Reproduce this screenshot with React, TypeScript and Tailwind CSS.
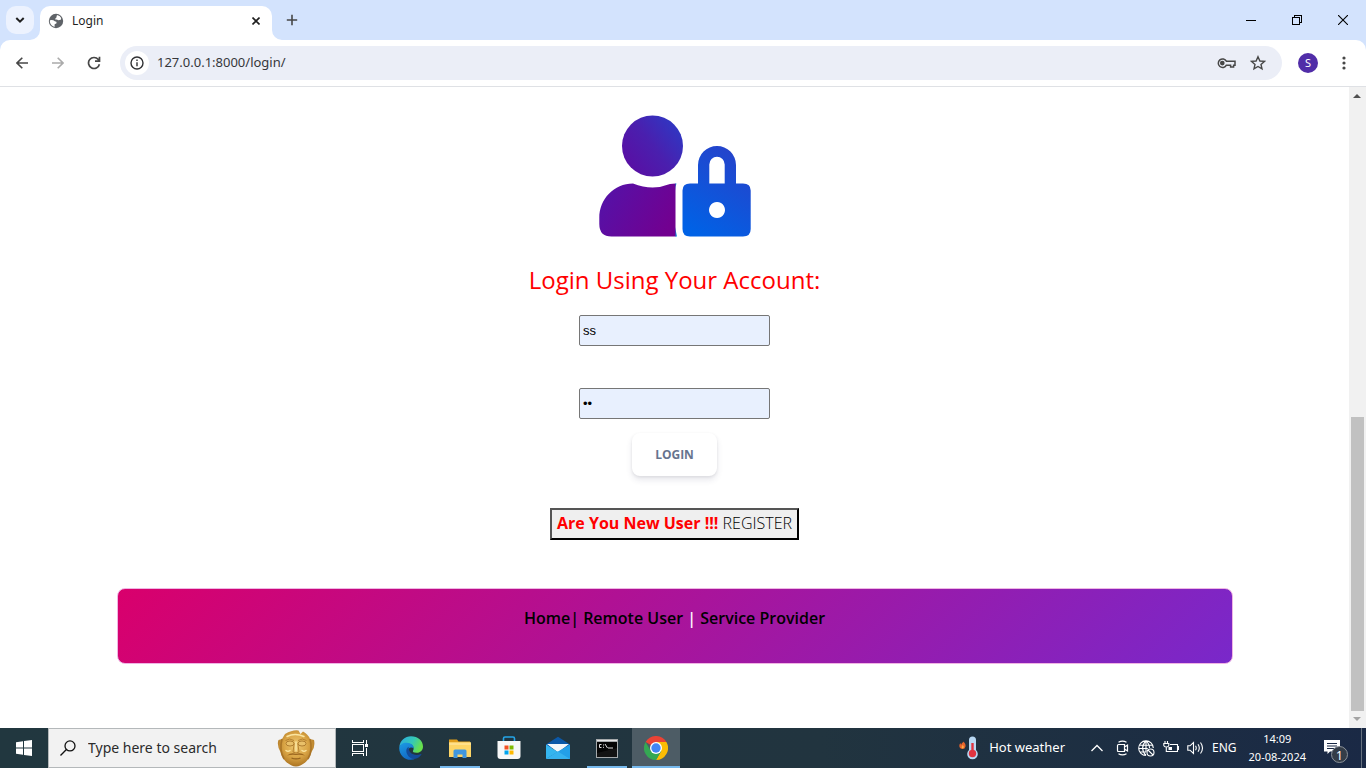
import React from "react";

const ui = "font-['Noto_Sans','Open_Sans',sans-serif]";

function TabStrip() {
  return (
    <div className="flex h-10 items-center bg-[#d3e3fd]">
      <button aria-label="Search tabs" className="ml-1.5 flex h-7 w-7 items-center justify-center rounded-[10px] bg-[#ecf2fe]">
        <svg width="10" height="6" viewBox="0 0 10 6" fill="none" stroke="#1f1f1f" strokeWidth="2">
          <path d="M1.3 1 5 4.6 8.700 1" />
        </svg>
      </button>
      <div className="relative ml-1.5 flex h-[34px] w-58 items-center self-end rounded-t-[10px] bg-white pb-[5px] pl-2">
        <svg className="absolute bottom-0 -left-2.5" width="10" height="10" viewBox="0 0 10 10">
          <path d="M10 0A10 10 0 0 1 0 10H10Z" fill="#fff" />
        </svg>
        <svg className="absolute -right-2.5 bottom-0" width="10" height="10" viewBox="0 0 10 10">
          <path d="M0 0A10 10 0 0 0 10 10H0Z" fill="#fff" />
        </svg>
        <svg width="16" height="16" viewBox="0 0 16 16">
          <circle cx="8" cy="8" r="7.200" fill="#5f6368" />
          <path d="M1.900 7.200Q5 6.500 6.800 8.200 9 8.300 8.600 9.900 8.300 11 6.800 11.100 6.300 12 6.800 13.800C3.500 13.100 1.500 10.500 1.900 7.200ZM9 2.100Q12 2.500 13.200 4.900L12.800 6.800 10.200 7.200Q9.300 6.100 7.200 6.500 6.800 5.300 8.200 5Z" fill="#fff" />
        </svg>
        <span className="ml-2 flex-1 text-xs text-[#1f1f1f]">Login</span>
        <button aria-label="Close tab" className="mr-2 flex h-4 w-4 items-center justify-center">
          <svg width="8" height="8" viewBox="0 0 8 8" stroke="#1f1f1f" strokeWidth="1.600">
            <path d="M.5.5l7 7M7.500.5l-7 7" />
          </svg>
        </button>
      </div>
      <button aria-label="New tab" className="ml-3.5 flex h-3 w-3 items-center justify-center">
        <svg width="12" height="12" viewBox="0 0 12 12" stroke="#474747" strokeWidth="1.600">
          <path d="M6 .8v10.400M.8 6h10.400" />
        </svg>
      </button>
      <div className="ml-auto flex h-full">
        <button aria-label="Minimize" className="flex w-[46px] items-center justify-center">
          <svg width="10" height="10" shapeRendering="crispEdges"><path d="M0 5.500h10" stroke="#000" /></svg>
        </button>
        <button aria-label="Restore" className="flex w-[46px] items-center justify-center">
          <svg width="10" height="10" fill="none" stroke="#000" shapeRendering="crispEdges">
            <path d="M.5 2.500h7v7h-7zM2.500 2V.5h7v7H8" />
          </svg>
        </button>
        <button aria-label="Close" className="flex w-[46px] items-center justify-center">
          <svg width="10" height="10" stroke="#000" strokeWidth="1.100"><path d="M0 0l10 10M10 0L0 10" /></svg>
        </button>
      </div>
    </div>
  );
}

function Toolbar() {
  return (
    <div className="bg-[#d3e3fd]">
      <div className="flex h-[47px] items-center rounded-t-[10px] border-b border-[#dfe1e5] bg-white">
        <button aria-label="Back" className="ml-3 flex h-5 w-5 items-center justify-center">
          <svg width="12" height="12" viewBox="0 0 12 12" fill="none" stroke="#474747" strokeWidth="1.600">
            <path d="M12 6H1.200M6.300.7 1 6l5.300 5.300" />
          </svg>
        </button>
        <button aria-label="Forward" className="ml-4 flex h-5 w-5 items-center justify-center">
          <svg width="12" height="12" viewBox="0 0 12 12" fill="none" stroke="#ababab" strokeWidth="1.600">
            <path d="M0 6h10.800M5.700.7 11 6l-5.300 5.300" />
          </svg>
        </button>
        <button aria-label="Reload" className="ml-4 flex h-5 w-5 items-center justify-center">
          <svg width="14" height="14" viewBox="0 0 14 14" fill="none" stroke="#474747" strokeWidth="1.700">
            <path d="M12.400 8.200A5.500 5.500 0 1 1 11.300 3.500L12.500 5M12.500.8V5.200H8" />
          </svg>
        </button>
        <div className="ml-4 flex h-[34px] flex-1 items-center rounded-full bg-[#ebeef7] pl-[5px]">
          <button aria-label="Site information" className="flex h-6 w-6 items-center justify-center rounded-full bg-white">
            <svg width="14" height="14" viewBox="0 0 14 14" fill="none" stroke="#303134" strokeWidth="1.400">
              <circle cx="7" cy="7" r="6" />
              <path d="M7 6.200v4M7 3.600v1.500" />
            </svg>
          </button>
          <input aria-label="Address" defaultValue="127.0.0.1:8000/login/" className="ml-2 min-w-0 flex-1 bg-transparent text-[13px] text-[#36373b] outline-none" />
          <button aria-label="Passwords" className="mr-3.5">
            <svg width="19" height="12" viewBox="0 0 19 12" fill="none" stroke="#474747" strokeWidth="1.500">
              <path d="M9.400 4.200H18V8.200H16.600V10H13.600V8.200H9.400A4.300 4.300 0 1 1 9.400 4.200Z" />
              <circle cx="5.300" cy="6.100" r="1.600" fill="#474747" />
            </svg>
          </button>
          <button aria-label="Bookmark" className="mr-4">
            <svg width="16" height="16" viewBox="0 0 16 16" fill="none" stroke="#474747" strokeWidth="1.400">
              <path d="M8 1.800 9.900 6 14.400 6.400 11 9.400 12 13.900 8 11.500 4 13.900 5 9.400 1.600 6.400 6.100 6Z" />
            </svg>
          </button>
        </div>
        <button aria-label="Profile" className="ml-4 flex h-5 w-5 items-center justify-center rounded-full bg-[#512da8] text-[11px] text-white">S</button>
        <button aria-label="Menu" className="mr-3 ml-4 flex h-5 w-5 items-center justify-center">
          <svg width="4" height="14" viewBox="0 0 4 14" fill="#474747">
            <circle cx="2" cy="2" r="1.600" /><circle cx="2" cy="7" r="1.600" /><circle cx="2" cy="12" r="1.600" />
          </svg>
        </button>
      </div>
    </div>
  );
}

function AccountArt() {
  return (
    <svg width="152" height="122" viewBox="0 0 152 122">
      <defs>
        <linearGradient id="head" x1=".1" y1="1" x2="1" y2=".3">
          <stop offset="0" stopColor="#5c0ca2" /><stop offset=".55" stopColor="#4a1fae" /><stop offset="1" stopColor="#3036c2" />
        </linearGradient>
        <linearGradient id="body" x1="0" y1=".2" x2="1" y2=".6">
          <stop offset="0" stopColor="#5412a8" /><stop offset="1" stopColor="#720090" />
        </linearGradient>
        <linearGradient id="lock" gradientUnits="userSpaceOnUse" x1="86" y1="112" x2="136" y2="32">
          <stop offset="0" stopColor="#0062e6" /><stop offset="1" stopColor="#2642ca" />
        </linearGradient>
      </defs>
      <circle cx="53.500" cy="31" r="30.500" fill="url(#head)" />
      <path d="M76 68.500H77.500Q76 72 76 76ZM76 112 78 121.500H76Z" fill="#0a8fdc" />
      <path d="M34 68.500Q53.500 76 71 69L76.500 68.500V121.500H12.500Q.3 121.500.3 109V103C.3 84 15 68.500 34 68.500Z" fill="url(#body)" />
      <path fill="url(#lock)" fillRule="evenodd" d="M99 68.500V50a19 19 0 0 1 38 0V68.500H144q7.700 0 7.700 7V114q0 7.500-7.700 7.500H91q-7.500 0-7.500-7.500V75.500q0-7 7.500-7ZM110.300 68.500H125.700V49.500a7.700 7.700 0 0 0-15.400 0ZM118 87a8 8 0 1 0 .01 0Z" />
    </svg>
  );
}

const field =
  "h-[31px] w-[191px] rounded-[2px] border border-[#767676] bg-[#e8f0fe] px-[3px] font-['Liberation_Sans',Arial,sans-serif] text-[13px] text-black outline-none";

function LoginPage() {
  return (
    <main className="flex-1 bg-white px-6 pt-7 font-['Open_Sans',sans-serif]">
      <form className="flex flex-col items-center" onSubmit={(e) => e.preventDefault()}>
        <AccountArt />
        <h1 className="mt-6 text-2xl leading-[38px] font-normal text-[#f00]">Login Using Your Account:</h1>
        <input aria-label="Username" defaultValue="ss" className={`mt-4 ${field}`} />
        <input aria-label="Password" type="password" defaultValue="ss" className={`mt-[42px] ${field}`} />
        <button type="submit" className="mt-3.5 h-[43px] w-[85px] rounded-lg bg-white text-xs font-bold text-[#67748e] shadow-[0_4px_6px_rgba(50,50,93,0.11),0_1px_3px_rgba(0,0,0,0.08)]">
          LOGIN
        </button>
        <button type="button" className="mt-8 h-8 border-2 border-t-[#555] border-r-black border-b-black border-l-[#555] bg-[#efefef] px-[5px] pb-0.5 text-base leading-6 text-black">
          <b className="font-bold text-[#f00]">Are You New User !!!</b> <span className="font-light">REGISTER</span>
        </button>
      </form>
      <footer className="mx-auto mt-12 h-[76px] max-w-[1116px] rounded-lg border border-[#efb4e4] bg-[linear-gradient(135deg,#d9006c,#7928ca)] pt-[17px] text-center text-base leading-6 font-semibold text-black">
        <a href="#home">Home</a>| <a href="#remote">Remote User</a> <span className="text-white">|</span> <a href="#provider">Service Provider</a>
      </footer>
    </main>
  );
}

function ScrollRail() {
  return (
    <div className="flex w-[17px] flex-col items-center bg-[#f1f1f1]">
      <svg width="17" height="17"><path d="M4 11h8L8 7Z" fill="#505050" /></svg>
      <div className="min-h-0 flex-[313]" />
      <div className="w-[13px] flex-[294] bg-[#c1c1c1]" />
      <svg width="17" height="17"><path d="M4 6h8L8 10Z" fill="#a3a3a3" /></svg>
    </div>
  );
}

function Mask() {
  return (
    <svg width="38" height="37" viewBox="0 0 38 37">
      <defs>
        <radialGradient id="gold" cx=".5" cy=".42" r=".6">
          <stop offset="0" stopColor="#efca74" /><stop offset=".55" stopColor="#d9a445" /><stop offset="1" stopColor="#a8701f" />
        </radialGradient>
      </defs>
      <path d="M8 4Q16-.5 21.500.5L23.500 4 26 1.500Q31 4 33 9L37 10Q38.500 17 34.500 22C33 30 25 36.500 19 36.500S5 30 3.500 22Q-.5 15 1.500 10L5 9Z" fill="url(#gold)" />
      <path d="M5 9Q2 20 7 29M33 9Q36 20 31 29" fill="none" stroke="#9d6820" strokeWidth="1.600" opacity=".7" />
      <ellipse cx="13" cy="13.500" rx="4" ry="2.500" fill="#e9c069" stroke="#a26e25" strokeWidth=".8" />
      <ellipse cx="25" cy="13.500" rx="4" ry="2.500" fill="#e9c069" stroke="#a26e25" strokeWidth=".8" />
      <path d="M8.500 10.500q4-3 8.500 0M21 10.500q4.500-3 8.500 0M17.200 13.500 16 22q3 2.200 6 0l-1.200-8.500" fill="none" stroke="#b07a2c" strokeWidth=".9" />
      <path d="M10 25.500Q14.500 21.800 19 24q4.500-2.200 9 1.500-4.500-1-9-.5-4.500-.5-9 .5Z" fill="#9c671f" />
      <path d="M14.500 28q4.500 1.800 9 0" fill="none" stroke="#93601c" strokeWidth="1.200" />
      <path d="M19 12v9M10 6.500q8-4 17 0M9 20.500q2 1.500 4 0M25 20.500q2 1.500 4 0" fill="none" stroke="#fbe5a0" strokeWidth="1.500" strokeLinecap="round" />
    </svg>
  );
}

function EdgeIcon() {
  return (
    <svg width="24" height="24" viewBox="0 0 24 24">
      <defs>
        <linearGradient id="edgeA" x1="0" y1="0" x2="1" y2=".4"><stop offset="0" stopColor="#2aa8e6" /><stop offset=".6" stopColor="#35c9b5" /><stop offset="1" stopColor="#67e04c" /></linearGradient>
        <linearGradient id="edgeB" x1="0" y1="0" x2=".5" y2="1"><stop offset="0" stopColor="#1c9ce4" /><stop offset="1" stopColor="#1268c4" /></linearGradient>
      </defs>
      <path d="M.3 11C1 4.500 6 .2 12 .2 19 .2 24 5 24 10.500c0 4-3 6.300-6.500 6.300-3 0-4-1-3.500-2 1.500-2 .6-7-5-7C4.500 7.800 1 9.500.3 11Z" fill="url(#edgeA)" />
      <path d="M.2 12C.5 8.500 4 6.500 8 6.700c4 .1 7 2.600 6.700 5.600-3-2.300-6.500 0-6 4C9.300 21 14 23 17 22.600 9 26.500.2 21 .2 12Z" fill="url(#edgeB)" />
      <path d="M9.700 10.800c-2 1.200-2.800 3.200-2.200 5.700C8.700 21 13 23.700 17.200 22.600c2.300-.9 4-2.400 5.200-4.200.2-.4 0-.6-.5-.4-6 2.800-13-.7-12.200-7.200Z" fill="#134b9a" />
    </svg>
  );
}

function ExplorerIcon() {
  return (
    <svg width="22" height="19" viewBox="0 0 22 19">
      <path d="M0 .5h8l1.500 2H21V8H0Z" fill="#e09d1a" />
      <path d="M0 3.500h22V18H0Z" fill="#fdd566" />
      <path d="M0 3.500h22V6H0Z" fill="#ffe08a" />
      <path d="M4.500 19V12q0-1.500 1.500-1.500h10q1.500 0 1.500 1.500v7h-4v-3.500h-5V19Z" fill="#3f97de" />
    </svg>
  );
}

function StoreIcon() {
  return (
    <svg width="24" height="24" viewBox="0 0 24 24">
      <path d="M6.500 6V2.500Q6.500 1 8 1h8q1.500 0 1.500 1.500V6" fill="none" stroke="#25a5e8" strokeWidth="1.600" />
      <path d="M.5 5h23v15q0 3-3 3h-17q-3 0-3-3Z" fill="#f7f7f7" />
      <path d="M7.500 9.500h4v4h-4z" fill="#f25022" /><path d="M12.500 9.500h4v4h-4z" fill="#7fba00" />
      <path d="M7.500 14.500h4v4h-4z" fill="#00a4ef" /><path d="M12.500 14.500h4v4h-4z" fill="#ffb900" />
    </svg>
  );
}

function MailIcon() {
  return (
    <svg width="24" height="24" viewBox="0 0 24 24">
      <path d="M0 8.500 12 .8 24 8.500V12H0Z" fill="#0b58a8" />
      <path d="M1 8h22L12 16.500Z" fill="#f4f7fa" />
      <path d="M0 8.500 12 16 0 23Z" fill="#35b5ef" />
      <path d="M24 8.500V23H0L12 15.500Z" fill="#239fe8" />
      <path d="M0 23 12 15.500 24 23Z" fill="#36b2ef" />
    </svg>
  );
}

function TerminalIcon() {
  return (
    <svg width="22" height="19" viewBox="0 0 22 19">
      <path d="M0 0h22v19H0z" fill="#a5a9ab" /><path d="M1 3h20v15H1z" fill="#050505" /><path d="M1 1h20v1H1z" fill="#e7e7e7" />
      <path d="M5.500 5.500H3.500V8.500H5.500M7.500 5.500v1M7.500 7.800v1M9 5l2.500 4M12 9h5" stroke="#ddd" fill="none" />
      <path d="M1 14 21 9v9H1Z" fill="#fff" opacity=".06" />
    </svg>
  );
}

function ChromeIcon() {
  return (
    <svg width="24" height="24" viewBox="0 0 24 24">
      <path d="M12 12 1.600 6A12 12 0 0 1 22.400 6H12Z" fill="#ea4335" />
      <path d="M22.400 6A12 12 0 0 1 12 24L17.200 15 12 6Z" fill="#fbbc04" />
      <path d="M12 24A12 12 0 0 1 1.600 6L6.800 15 17.200 15Z" fill="#34a853" />
      <circle cx="12" cy="12" r="6" fill="#fff" /><circle cx="12" cy="12" r="4.700" fill="#4285f4" />
    </svg>
  );
}

const task = "flex h-10 w-12 items-center justify-center";

function Taskbar() {
  return (
    <nav aria-label="Taskbar" className="flex h-10 items-center bg-linear-to-r from-[#21373f] via-[#21343f] via-60% to-[#1a2945] text-white">
      <button aria-label="Start" className={task}>
        <svg width="16" height="16" viewBox="0 0 16 16" fill="#fff">
          <path d="M0 2.200 7 1.300V7.500H0ZM8 1.100 16 0V7.500H8ZM0 8.500H7V14.700L0 13.800ZM8 8.500H16V16L8 14.900Z" />
        </svg>
      </button>
      <label className="flex h-10 w-72 items-center border border-[#b4b8ba] bg-[#f2f2f2] pl-[11px]">
        <svg width="16" height="16" viewBox="0 0 16 16" fill="none" stroke="#111" strokeWidth="1.300">
          <circle cx="10" cy="5.900" r="5" /><path d="M6.400 9.500.5 15.500" />
        </svg>
        <input aria-label="Search" placeholder="Type here to search" className="ml-3 min-w-0 flex-1 bg-transparent text-sm outline-none placeholder:text-[#2b2b2b]" />
        <span className="mr-5"><Mask /></span>
      </label>
      <button aria-label="Task view" className={task}>
        <svg width="17" height="16" viewBox="0 0 17 16" fill="none" stroke="#fff" shapeRendering="crispEdges">
          <path d="M.5 0v2.500h11V0M.5 4.500h11v7H.5zM.5 16v-2.500h11V16M14.500 0v4M14.500 8v8" /><path d="M13 4h3v3h-3z" fill="#fff" stroke="none" />
        </svg>
      </button>
      <div className="ml-[3px] flex gap-px">
        <button aria-label="Edge" className={task}><EdgeIcon /></button>
        <button aria-label="File Explorer" className={`relative ${task}`}>
          <ExplorerIcon /><span className="absolute inset-x-1 bottom-0 h-0.5 bg-[#76b9ed]" />
        </button>
        <button aria-label="Store" className={task}><StoreIcon /></button>
        <button aria-label="Mail" className={task}><MailIcon /></button>
        <button aria-label="Command Prompt" className={`relative ${task}`}>
          <TerminalIcon /><span className="absolute inset-x-1 bottom-0 h-0.5 bg-[#76b9ed]" />
        </button>
        <button aria-label="Chrome" className={`relative bg-[#4d5c65] ${task}`}>
          <ChromeIcon /><span className="absolute inset-x-0 bottom-0 h-0.5 bg-[#76b9ed]" />
        </button>
      </div>
      <button className="ml-auto flex items-center gap-2.5 text-[13px]">
        <svg width="20" height="24" viewBox="0 0 20 24">
          <path d="M3 6.500Q4.500 7.500 4 5.500 7 7.500 6.500 10.500 6 13 3.500 13 .3 12.700.3 9.800.3 8 1.500 7Q1.500 8.500 2.500 8.500Z" fill="#e8642d" />
          <path d="M2.500 11q1-.5 1-2.300 2 1.800 1 3.600Q2.700 12.800 2.500 11Z" fill="#ffb347" />
          <path d="M10 4a3.500 3.500 0 0 1 7 0v10a5.300 5.300 0 1 1-7 0Z" fill="#b8d8f3" />
          <circle cx="13.500" cy="17.500" r="3.700" fill="#e03440" /><path d="M12.300 7h2.400v9h-2.400z" fill="#e03440" />
        </svg>
        Hot weather
      </button>
      <div className="ml-[25px] flex items-center gap-2">
        <button aria-label="Show hidden icons"><svg width="14" height="8" viewBox="0 0 14 8" fill="none" stroke="#fff" strokeWidth="1.300"><path d="M1.500 7 7 1.500 12.500 7" /></svg></button>
        <button aria-label="Meet Now" className="ml-1">
          <svg width="14" height="16" viewBox="0 0 14 16" fill="none" stroke="#fff" strokeWidth="1.200">
            <path d="M2.500 4.500h6v7h-6Q1.500 11.500 1.500 10.500v-5Q1.500 4.500 2.500 4.500ZM8.500 7 11.500 5v6L8.500 9M2.500 2.200q4-2.200 8 0M2.500 13.800q4 2.200 8 0" />
          </svg>
        </button>
        <button aria-label="Network">
          <svg width="17" height="17" viewBox="0 0 17 17" fill="none" stroke="#fff" strokeWidth="1.100">
            <path d="M8 15.500A7.300 7.300 0 1 1 15.300 8M8 .8C3.500 5 3.500 11 8 15.500M8 .8C10.500 3 11.500 5.500 11.500 8M1 5.200h14M.8 8.500h9M1.500 12h6.500M8 .8v11" />
            <circle cx="12.500" cy="12.500" r="3.500" /><path d="M10 10l5 5" />
          </svg>
        </button>
        <button aria-label="Battery">
          <svg width="16" height="14" viewBox="0 0 16 14" fill="none" stroke="#fff" strokeWidth="1.100">
            <path d="M7 3.500h7.500v7H4.500M14.500 5.500h1v3h-1M.8 2.500h5v2Q5.500 6 3.300 6 1 6 .8 4.500ZM2 0v2.500M4.500 0v2.500M3.300 6v4.500h2" /><path d="M5.500 6h3.500v3H5.500z" fill="#fff" stroke="none" />
          </svg>
        </button>
        <button aria-label="Volume">
          <svg width="17" height="14" viewBox="0 0 17 14" fill="none" stroke="#fff" strokeWidth="1.100">
            <path d="M.8 4.800H3L6.500 1.500v11L3 9.200H.8ZM8.500 4.800q1.500 2.200 0 4.400M11 3.200q2.600 3.800 0 7.600M13.500 1.500q4 5.500 0 11" />
          </svg>
        </button>
        <button className="text-xs">ENG</button>
      </div>
      <button className="ml-3 text-center text-[11px] leading-[18px]">
        14:09<br />20-08-2024
      </button>
      <button aria-label="1 notification" className="relative mr-1 ml-4 h-10 w-10 border-r border-[#66717f]">
        <svg className="mt-1.5 ml-0.5" width="26" height="24" viewBox="0 0 26 24">
          <path d="M0 1h16v11.500H6L3.500 15V12.500H0Z" fill="#fff" />
          <path d="M3 4.500h10M3 7h10M3 9.500h7" stroke="#1a2945" />
          <circle cx="15.500" cy="15.500" r="8" fill="#343d48" stroke="#8b929a" />
        </svg>
        <span className="absolute top-[19px] left-3.5 text-xs leading-[18px] text-white">1</span>
      </button>
    </nav>
  );
}

export default function App() {
  return (
    <div className={`flex min-h-screen flex-col bg-white ${ui}`}>
      <header>
        <TabStrip />
        <Toolbar />
      </header>
      <div className="flex flex-1">
        <LoginPage />
        <ScrollRail />
      </div>
      <Taskbar />
    </div>
  );
}
